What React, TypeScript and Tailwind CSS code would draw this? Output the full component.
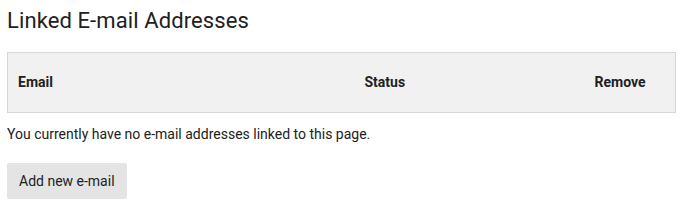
export default function App() {
  return (
    <div className="px-[7px] pt-[6px] font-['Roboto',sans-serif] text-[#212121] bg-white">
      <h1 className="text-[22px] leading-[30px] font-normal tracking-[0.1px]">Linked E-mail Addresses</h1>
      <table className="mt-[16px] w-[669px] border border-[#d6d6d6] bg-[#f1f1f1] border-collapse">
        <thead>
          <tr className="h-[60px] text-left text-[14px] font-bold">
            <th className="w-[347px] px-[10px] font-bold">Email</th>
            <th className="w-[228px] px-[10px] font-bold">Status</th>
            <th className="pl-[12px] pr-[8px] font-bold">Remove</th>
          </tr>
        </thead>
      </table>
      <p className="mt-[11px] text-[14px] leading-[20px]">You currently have no e-mail addresses linked to this page.</p>
      <button className="mt-[19px] h-[36px] px-[12px] bg-[#e4e4e4] rounded-[2px] text-[14px]">Add new e-mail</button>
    </div>
  );
}
